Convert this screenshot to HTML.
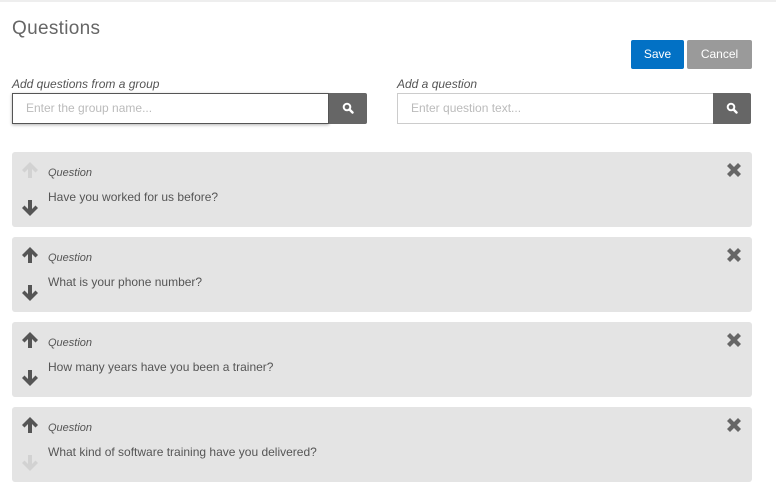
<!DOCTYPE html>
<html><head><style>
body{margin:0;width:776px;height:499px;background:#fff;font-family:"Liberation Sans",sans-serif;position:relative;overflow:hidden;color:#555}
.top{position:absolute;left:0;top:0;width:776px;height:2px;background:#eee}
h1{position:absolute;left:12px;top:18px;margin:0;font-size:19px;font-weight:normal;color:#666;letter-spacing:0.3px}
.btn{position:absolute;top:40px;height:29px;border-radius:2px;color:#fff;font-size:12px;line-height:29px;text-align:center}
.lbl{position:absolute;top:77px;font-size:12px;font-style:italic;color:#555}
.inp{position:absolute;top:93px;height:29px;border:1px solid #ccc;font-size:12px;color:#bbb;line-height:29px;padding-left:13px;box-sizing:content-box}
.sb{position:absolute;top:93px;height:31px;width:38px;background:#666;border-radius:0 2px 2px 0}
.sb svg{position:absolute;left:13px;top:9px}
.card{position:absolute;left:12px;width:740px;height:75px;background:#e4e4e4;border-radius:3px}
.card .q{position:absolute;left:36px;top:15px;font-size:11px;font-style:italic;color:#555}
.card .t{position:absolute;left:36px;top:38px;font-size:12px;color:#555}
.card .up{position:absolute;left:9px;top:9px}
.card .dn{position:absolute;left:9px;top:47px}
.card .x{position:absolute;left:714px;top:10px}
</style></head><body>
<div class="top"></div>
<h1>Questions</h1>
<div class="btn" style="left:631px;width:53px;background:#0271c5">Save</div>
<div class="btn" style="left:687px;width:65px;background:#9a9a9a">Cancel</div>
<div class="lbl" style="left:12px">Add questions from a group</div>
<div class="lbl" style="left:397px">Add a question</div>
<div class="inp" style="left:12px;width:302px;border-color:#555;box-shadow:0 1px 3px rgba(0,0,0,.3)">Enter the group name...</div>
<div class="sb" style="left:329px"><svg width="12" height="12" viewBox="0 0 12 12"><circle cx="5" cy="5" r="3.3" fill="none" stroke="#fff" stroke-width="2"/><path d="M7.5 7.5L10.5 10.5" stroke="#fff" stroke-width="2.4" stroke-linecap="round"/></svg></div>
<div class="inp" style="left:397px;width:302px">Enter question text...</div>
<div class="sb" style="left:713px"><svg width="12" height="12" viewBox="0 0 12 12"><circle cx="5" cy="5" r="3.3" fill="none" stroke="#fff" stroke-width="2"/><path d="M7.5 7.5L10.5 10.5" stroke="#fff" stroke-width="2.4" stroke-linecap="round"/></svg></div>

<svg width="0" height="0" style="position:absolute"><defs>
<symbol id="up" viewBox="0 0 18 18"><path d="M9 1L1 9l2.5 2.5L7 8v9h4V8l3.5 3.5L17 9z"/></symbol>
<symbol id="dn" viewBox="0 0 18 18"><path d="M9 17L1 9l2.5-2.5L7 10V1h4v9l3.5-3.5L17 9z"/></symbol>
<symbol id="x" viewBox="0 0 16 16"><path d="M1 4L4 1 8 5 12 1 15 4 11 8 15 12 12 15 8 11 4 15 1 12 5 8z"/></symbol>
</defs></svg>

<div class="card" style="top:152px"><svg class="up" width="18" height="18" fill="#d2d2d2"><use href="#up"/></svg><svg class="dn" width="18" height="18" fill="#555"><use href="#dn"/></svg><div class="q">Question</div><div class="t">Have you worked for us before?</div><svg class="x" width="16" height="16" fill="#666"><use href="#x"/></svg></div>
<div class="card" style="top:237px"><svg class="up" width="18" height="18" fill="#555"><use href="#up"/></svg><svg class="dn" width="18" height="18" fill="#555"><use href="#dn"/></svg><div class="q">Question</div><div class="t">What is your phone number?</div><svg class="x" width="16" height="16" fill="#666"><use href="#x"/></svg></div>
<div class="card" style="top:322px"><svg class="up" width="18" height="18" fill="#555"><use href="#up"/></svg><svg class="dn" width="18" height="18" fill="#555"><use href="#dn"/></svg><div class="q">Question</div><div class="t">How many years have you been a trainer?</div><svg class="x" width="16" height="16" fill="#666"><use href="#x"/></svg></div>
<div class="card" style="top:407px"><svg class="up" width="18" height="18" fill="#555"><use href="#up"/></svg><svg class="dn" width="18" height="18" fill="#d2d2d2"><use href="#dn"/></svg><div class="q">Question</div><div class="t">What kind of software training have you delivered?</div><svg class="x" width="16" height="16" fill="#666"><use href="#x"/></svg></div>
</body></html>
